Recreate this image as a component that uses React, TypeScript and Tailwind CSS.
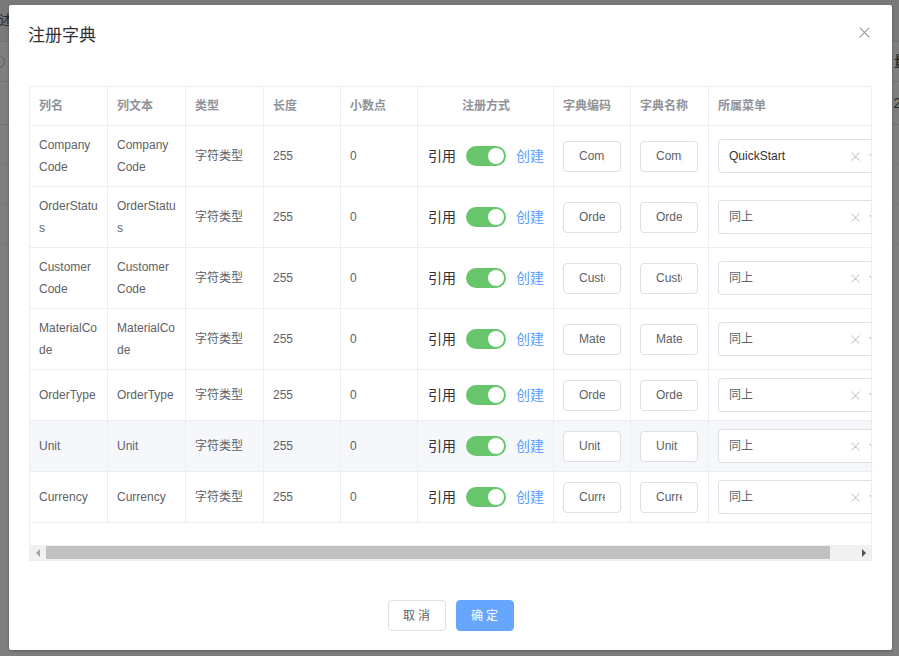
import React from 'react';

type Row = {
  name: string;
  text: string;
  code: string;
  menu: string;
  hover?: boolean;
};

const rows: Row[] = [
  { name: 'Company Code', text: 'Company Code', code: 'CompanyCode', menu: 'QuickStart' },
  { name: 'OrderStatus', text: 'OrderStatus', code: 'OrderStatus', menu: '同上' },
  { name: 'Customer Code', text: 'Customer Code', code: 'CustomerCode', menu: '同上' },
  { name: 'MaterialCode', text: 'MaterialCode', code: 'MaterialCode', menu: '同上' },
  { name: 'OrderType', text: 'OrderType', code: 'OrderType', menu: '同上' },
  { name: 'Unit', text: 'Unit', code: 'Unit', menu: '同上', hover: true },
  { name: 'Currency', text: 'Currency', code: 'Currency', menu: '同上' },
];

const headers = ['列名', '列文本', '类型', '长度', '小数点', '注册方式', '字典编码', '字典名称', '所属菜单'];

const CloseIcon = ({ size, color, stroke }: { size: number; color: string; stroke: number }) => (
  <svg width={size} height={size} viewBox="0 0 12 12" fill="none">
    <path d="M1 1L11 11M11 1L1 11" stroke={color} strokeWidth={stroke} strokeLinecap="round" />
  </svg>
);

const Switch = () => (
  <span className="flex h-[20px] w-[40px] items-center justify-end rounded-full bg-[#67c66b] p-[2px]">
    <span className="h-[16px] w-[16px] rounded-full bg-white" />
  </span>
);

// text box: padding on the outer box, clipping on the inner one
const TextBox = ({ value }: { value: string }) => (
  <div className="h-[31px] w-[58px] rounded-[4px] border border-[#dcdfe6] bg-white px-[15px]">
    <div className="overflow-hidden whitespace-nowrap text-[12px] leading-[29px] text-[#606266]">{value}</div>
  </div>
);

const MenuSelect = ({ value }: { value: string }) => (
  <div className="flex h-[34px] w-[170px] shrink-0 items-center rounded-[4px] border border-[#dcdfe6] bg-white pl-[10px] pr-[6px]">
    <span className={`flex-1 text-[12px] ${value === 'QuickStart' ? 'text-[#303133]' : 'text-[#606266]'}`}>{value}</span>
    <span className="mr-[7px] flex w-[10px] items-center justify-center">
      <CloseIcon size={9} color="#c0c4cc" stroke={1.4} />
    </span>
    <svg width="14" height="14" viewBox="0 0 14 14" fill="none">
      <path d="M3 5.5L7 9.5L11 5.5" stroke="#c0c4cc" strokeWidth="1.3" strokeLinecap="round" strokeLinejoin="round" />
    </svg>
  </div>
);

const App: React.FC = () => {
  const cell = 'flex items-center border-r border-[#ebeef5] pl-[9px] pr-[8px] py-[8px] break-all';

  return (
    <div className="relative h-[656px] w-[899px] overflow-hidden font-['Liberation_Sans','Noto_Sans_CJK_SC',sans-serif]">
      {/* page behind the dialog */}
      <div className="flex h-full w-full flex-col bg-white text-[14px] text-[#555]">
        <div className="flex h-[42px] items-center justify-between border-b border-[#e4e4e4] bg-[#f3f3f3]">
          <span className="ml-[-15px]">描述</span>
        </div>
        <div className="flex h-[40px] items-center justify-between border-b border-[#e4e4e4]">
          <span className="ml-[-8px] h-[13px] w-[13px] rounded-full border border-[#bbb]" />
          <span className="mr-[-9px] font-bold">量</span>
        </div>
        <div className="flex h-[43px] items-center justify-end border-b border-[#e4e4e4]">
          <span className="mr-[-10px]">22</span>
        </div>
        <div className="h-[40px] border-b border-[#eee]" />
        <div className="h-[40px] border-b border-[#eee]" />
        <div className="h-[40px] border-b border-[#eee]" />
      </div>
      <div className="absolute inset-0 bg-black/50" />

      {/* dialog */}
      <div className="absolute left-[9px] top-[5px] flex h-[645px] w-[883px] flex-col rounded-[2px] bg-white shadow-[0_1px_3px_rgba(0,0,0,0.3)]">
        <div className="px-[19px] pt-[19px] text-[17px] leading-[24px] text-[#303133]">注册字典</div>
        <button className="absolute right-[22px] top-[22px]">
          <CloseIcon size={11} color="#909399" stroke={1.1} />
        </button>

        <div className="mx-[20px] mt-[38px] overflow-hidden border border-[#ebeef5]">
          <div className="w-[869px]">
            <div className="grid grid-cols-[78px_78px_78px_77px_77px_136px_77px_78px_190px] border-b border-[#ebeef5] text-[12px] font-bold leading-[22px] text-[#909399]">
              {headers.map((h, i) => (
                <div key={h} className={`${cell} ${i === 5 ? 'justify-center' : ''}`}>
                  {h}
                </div>
              ))}
            </div>

            {rows.map((r) => (
              <div
                key={r.name}
                className={`grid grid-cols-[78px_78px_78px_77px_77px_136px_77px_78px_190px] border-b border-[#ebeef5] text-[12px] leading-[22px] text-[#606266] ${r.hover ? 'bg-[#f5f7fa]' : 'bg-white'}`}
              >
                <div className={cell}>{r.name}</div>
                <div className={cell}>{r.text}</div>
                <div className={cell}>字符类型</div>
                <div className={cell}>255</div>
                <div className={cell}>0</div>
                <div className={`${cell} justify-center gap-[10px]`}>
                  <span className="text-[14px] text-[#303133]">引用</span>
                  <Switch />
                  <span className="text-[14px] text-[#5c9dff]">创建</span>
                </div>
                <div className={cell}>
                  <TextBox value={r.code} />
                </div>
                <div className={cell}>
                  <TextBox value={r.code} />
                </div>
                <div className="flex items-center py-[8px] pl-[9px]">
                  <MenuSelect value={r.menu} />
                </div>
              </div>
            ))}
          </div>

          <div className="h-[22px]" />

          {/* horizontal scrollbar */}
          <div className="flex h-[15px] items-center bg-[#f1f1f1]">
            <div className="flex w-[16px] items-center justify-center">
              <span className="h-0 w-0 border-y-[4px] border-r-[4px] border-y-transparent border-r-[#a3a3a3]" />
            </div>
            <div className="h-[13px] w-[784px] bg-[#c1c1c1]" />
            <div className="flex-1" />
            <div className="flex w-[15px] items-center justify-center">
              <span className="h-0 w-0 border-y-[4px] border-l-[4px] border-y-transparent border-l-[#505050]" />
            </div>
          </div>
        </div>

        <div className="flex justify-center gap-[10px] pt-[39px]">
          <button className="h-[31px] w-[58px] rounded-[4px] border border-[#dcdfe6] bg-white pl-[3px] text-[12px] tracking-[3px] text-[#606266]">
            取消
          </button>
          <button className="h-[31px] w-[58px] rounded-[4px] border border-[#66a6ff] bg-[#66a6ff] pl-[3px] text-[12px] tracking-[3px] text-white">
            确定
          </button>
        </div>
      </div>
    </div>
  );
};

export default App;
